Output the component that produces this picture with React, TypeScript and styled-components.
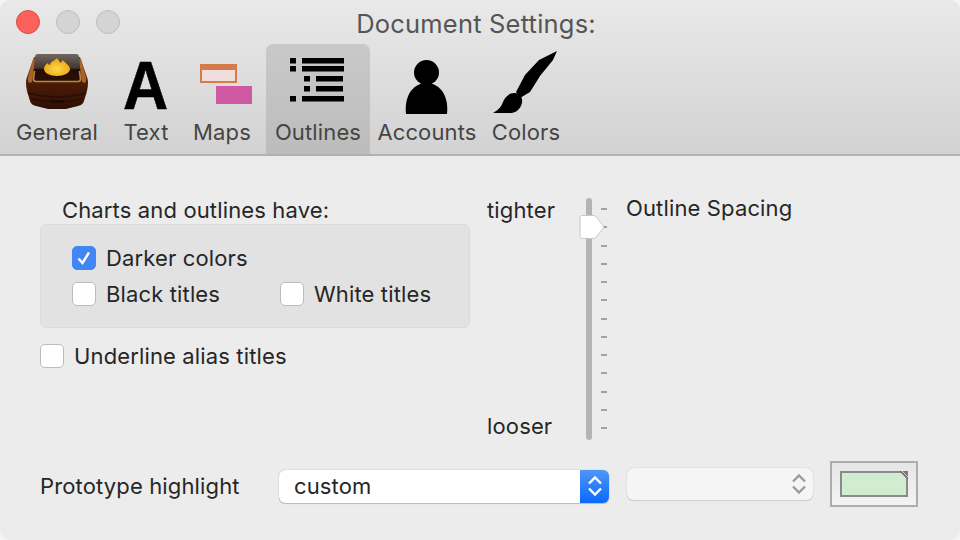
import React from "react";
import styled, { createGlobalStyle } from "styled-components";

const Global = createGlobalStyle`
  html, body { margin: 0; padding: 0; background: #f4f4f4; }
  body { font-family: Inter, "Liberation Sans", sans-serif; letter-spacing: 0.14px; }
`;

const Window = styled.div`
  width: 960px;
  height: 540px;
  box-sizing: border-box;
  background: #ececec;
  border-radius: 10px;
  overflow: hidden;
  display: flex;
  flex-direction: column;
`;
const Header = styled.header`
  height: 156px;
  box-sizing: border-box;
  flex: none;
  border-bottom: 2px solid #b2b2b2;
  background: linear-gradient(#e9e9e9, #d2d2d2);
`;
const TitleBar = styled.div`
  height: 44px;
  display: flex;
  align-items: center;
  padding: 0 128px 0 16px;
  box-sizing: border-box;
`;
const Lights = styled.div`
  display: flex;
  gap: 16px;
  margin-top: -1px;
`;
const Light = styled.span<{ $red?: boolean }>`
  width: 24px;
  height: 24px;
  box-sizing: border-box;
  border-radius: 50%;
  background: ${(p) => (p.$red ? "#fc625c" : "#d4d4d4")};
  border: 1px solid ${(p) => (p.$red ? "#e04a42" : "#bdbdbd")};
`;
const Title = styled.h1`
  flex: 1;
  margin: 0;
  text-align: center;
  font-size: 25.5px;
  font-weight: 400;
  letter-spacing: 0.2px;
  line-height: 48px;
  height: 44px;
  color: #555;
`;
const Tabs = styled.nav`
  display: flex;
  padding-left: 8px;
  height: 110px;
`;
const Tab = styled.div<{ $w: number; $gap?: number; $on?: boolean }>`
  width: ${(p) => p.$w}px;
  margin-right: ${(p) => p.$gap ?? 0}px;
  height: 110px;
  border-radius: 7px 7px 0 0;
  display: flex;
  flex-direction: column;
  align-items: center;
  background: ${(p) => (p.$on ? "linear-gradient(#c9c9c9, #bcbcbc)" : "none")};
`;
const IconBox = styled.div`
  height: 75px;
  width: 100%;
  display: flex;
  justify-content: center;
  flex: none;
`;
const TabLabel = styled.span`
  font-size: 22px;
  line-height: 26px;
  color: #454545;
  white-space: nowrap;
`;
const LetterIcon = styled.span`
  font-family: "Liberation Sans", sans-serif;
  font-weight: 700;
  font-size: 68px;
  line-height: 66px;
  height: 66px;
  color: #000;
  margin-top: 8px;
  display: block;
  transform: scaleX(0.92);
  -webkit-text-stroke: 0.6px #000;
`;
const Body = styled.main`
  flex: 1;
  display: flex;
  flex-direction: column;
  padding: 42px 42px 33px 40px;
  box-sizing: border-box;
`;
const Upper = styled.div`
  display: flex;
  height: 265px;
  flex: none;
`;
const Left = styled.section`
  width: 430px;
  flex: none;
`;
const GroupTitle = styled.div`
  padding-left: 22px;
  height: 26px;
  font-size: 22px;
  line-height: 24px;
  color: #262626;
`;
const Group = styled.div`
  height: 104px;
  box-sizing: border-box;
  background: #e2e2e2;
  border: 1px solid #dadada;
  border-radius: 7px;
  padding: 21px 0 0 31px;
  display: flex;
  flex-direction: column;
  gap: 12px;
`;
const CheckRow = styled.div`
  display: flex;
`;
const Check = styled.label<{ $w?: number }>`
  display: flex;
  align-items: center;
  gap: 10px;
  height: 24px;
  line-height: 24px;
  width: ${(p) => (p.$w ? `${p.$w}px` : "auto")};
  font-size: 22px;
  color: #262626;
  white-space: nowrap;
`;
const Box = styled.span<{ $on?: boolean }>`
  width: 24px;
  height: 24px;
  flex: none;
  box-sizing: border-box;
  border-radius: 5px;
  background: ${(p) => (p.$on ? "#4087f5" : "#fff")};
  border: 1px solid ${(p) => (p.$on ? "#4087f5" : "#bcbcbc")};
  display: flex;
  align-items: center;
  justify-content: center;
`;
const Underline = styled.div`
  margin-top: 16px;
`;
const SliderArea = styled.section`
  position: relative;
  margin-left: 17px;
  width: 120px;
  flex: none;
  height: 254px;
  display: flex;
`;
const SliderLabels = styled.div`
  width: 99px;
  flex: none;
  display: flex;
  flex-direction: column;
  justify-content: space-between;
  font-size: 22px;
  line-height: 26px;
  color: #262626;
  margin-top: -1px;
  height: 242px;
`;
const Track = styled.div`
  width: 6px;
  height: 242px;
  border-radius: 3px;
  background: #b4b4b4;
  flex: none;
`;
const Ticks = styled.div`
  margin-left: 9px;
  padding-top: 10px;
  height: 221px;
  display: flex;
  flex-direction: column;
  justify-content: space-between;
`;
const TickMark = styled.i`
  display: block;
  width: 6px;
  height: 2px;
  background: #a2a2a2;
`;
const Thumb = styled.svg`
  position: absolute;
  left: 92px;
  top: 16px;
`;
const Spacing = styled.div`
  font-size: 22px;
  line-height: 26px;
  color: #262626;
  margin-left: 19px;
  margin-top: -3px;
`;
const Bottom = styled.div`
  display: flex;
  align-items: center;
  height: 46px;
  flex: none;
`;
const BottomLabel = styled.span`
  width: 239px;
  flex: none;
  font-size: 22px;
  color: #262626;
`;
const Select = styled.div`
  width: 330px;
  height: 33px;
  box-sizing: border-box;
  border-radius: 6px;
  background: #fff;
  box-shadow: 0 0 1px rgba(0,0,0,.45), 0 1px 1px rgba(0,0,0,.18);
  overflow: hidden;
  display: flex;
  align-items: center;
  justify-content: space-between;
  font-size: 22px;
  color: #262626;
  padding-left: 15px;
`;
const SelectArrows = styled.span`
  width: 29px;
  height: 33px;
  flex: none;
  background: linear-gradient(#4f97f7, #0a68fb);
  display: flex;
  align-items: center;
  justify-content: center;
`;
const Disabled = styled.div`
  width: 186px;
  height: 32px;
  box-sizing: border-box;
  margin-left: 18px;
  margin-top: -5px;
  border-radius: 6px;
  background: #f5f5f5;
  box-shadow: 0 0 1px rgba(0,0,0,.3), 0 1px 1px rgba(0,0,0,.1);
  display: flex;
  align-items: center;
  justify-content: flex-end;
  padding-right: 6px;
`;
const Well = styled.div`
  width: 88px;
  height: 46px;
  box-sizing: border-box;
  margin-left: 17px;
  border: 2px solid #adadad;
  background: linear-gradient(#e6e6e6, #f3f3f3);
  padding: 8px;
  margin-top: -5px;
`;
const Swatch = styled.div`
  position: relative;
  height: 26px;
  box-sizing: border-box;
  border: 2px solid #8a8a8a;
  background: #d2ecd0;
`;
const SwatchCorner = styled.svg`
  position: absolute;
  right: -2px;
  top: -2px;
`;

const Chevrons = ({ c, w = 2.4 }: { c: string; w?: number }) => (
  <svg width="16" height="24" viewBox="0 0 16 24" fill="none" stroke={c} strokeWidth={w}>
    <path d="M2 9.500 8 3.500l6 6M2 14.500l6 6 6-6" />
  </svg>
);

const GeneralIcon = () => (
  <svg width="66" height="62" viewBox="0 0 66 62" style={{ marginTop: 7, marginLeft: -1 }}>
    <defs>
      <linearGradient id="b" x1="0" y1="0" x2="0" y2="1">
        <stop offset="0" stopColor="#7e4016" />
        <stop offset=".45" stopColor="#4e1e08" />
        <stop offset="1" stopColor="#2e0f04" />
      </linearGradient>
      <linearGradient id="t" x1="0" y1="0" x2="0" y2="1">
        <stop offset="0" stopColor="#6f6763" />
        <stop offset=".5" stopColor="#44352f" />
        <stop offset=".56" stopColor="#240c04" />
        <stop offset="1" stopColor="#2c1005" />
      </linearGradient>
      <radialGradient id="f" cx=".5" cy=".6" r=".6">
        <stop offset="0" stopColor="#ffd84a" />
        <stop offset="1" stopColor="#e8a010" />
      </radialGradient>
    </defs>
    <path d="M10 6 3 26q-2 5 0 14l3 10q1 4 6 5l12 3h18l12-3q5-1 6-5l3-10q2-9 0-14L56 6Z" fill="url(#b)" />
    <path d="M9 8 4 26q-1 3 1 6l3-1 3-22ZM57 8l5 18q1 3-1 6l-3-1-3-22Z" fill="#a9622a" />
    <path d="M4 42q29 8 58 0M8 48q25 6 50 0" stroke="#2a0d03" strokeWidth="1.600" fill="none" />
    <rect x="26" y="49" width="14" height="2.500" rx="1" fill="#1e0802" />
    <path d="M14 3h38q3 0 3 3l2 22q0 3-3 3H12q-3 0-3-3l2-22q0-3 3-3Z" fill="url(#t)" />
    <path d="M10.500 20 9.500 28q0 2.500 2.500 2.500h42q2.500 0 2.500-2.500l-1-8" stroke="#b98a3c" strokeWidth="1.600" fill="none" />
    <path d="M14 2h38" stroke="#e6e0d8" strokeWidth="1.400" />
    <path d="M33 7c1 2 3 3 3 5 2-1 2-2 2-3 3 2 8 6 8 9 0 4-6 7-13 7s-13-3-13-7c0-3 2-5 4-6 0 1 1 2 2 2 0-3 4-4 7-7Z" fill="url(#f)" />
  </svg>
);

const MapsIcon = () => (
  <svg width="72" height="60" viewBox="0 0 72 60" style={{ marginTop: 20 }}>
    <rect x="15" y="1" width="35" height="17" fill="#f0dddd" stroke="#d47b4c" strokeWidth="2" />
    <rect x="14" y="0" width="37" height="6" fill="#d47b4c" />
    <rect x="30" y="22" width="36" height="18" fill="#cf58a3" />
  </svg>
);

const OutlinesIcon = () => (
  <svg width="104" height="60" viewBox="0 0 104 60" style={{ marginTop: 14 }}>
    <g fill="#000">
      <rect x="24" y="0" width="6" height="5.500" />
      <rect x="36" y="0" width="42" height="5.500" />
      <rect x="24" y="8" width="6" height="5.500" />
      <rect x="36" y="8" width="42" height="5.500" />
      <rect x="38" y="18" width="6" height="5.500" />
      <rect x="50" y="18" width="27" height="5.500" />
      <rect x="38" y="28" width="6" height="5.500" />
      <rect x="50" y="28" width="27" height="5.500" />
      <rect x="24" y="38" width="6" height="5.500" />
      <rect x="36" y="38" width="42" height="5.500" />
    </g>
  </svg>
);

const PersonIcon = () => (
  <svg width="44" height="56" viewBox="0 0 44 56" style={{ marginTop: 14 }}>
    <circle cx="21.500" cy="14.500" r="12.500" fill="#000" />
    <path d="M1 56C-1 38 8 25 21.500 25S44 38 42 56Z" fill="#000" />
  </svg>
);

const BrushIcon = () => (
  <svg width="68" height="66" viewBox="0 0 68 66" style={{ marginTop: 7, marginLeft: -1 }}>
    <path d="M65 0 61 9 48 25 38 41 28 47 24 41 33 24 47 9Z" fill="#000" />
    <path d="M22 42c4 0 7 2 8 6 1 6-3 13-10 14H1l3-2c3-2 5-4 7-9 2-5 6-9 11-9Z" fill="#000" />
  </svg>
);

const TICKS = Array.from({ length: 13 }, (_, i) => i);

export default function App() {
  return (
    <>
      <Global />
      <Window>
        <Header>
          <TitleBar>
            <Lights>
              <Light $red />
              <Light />
              <Light />
            </Lights>
            <Title>Document Settings:</Title>
          </TitleBar>
          <Tabs>
            <Tab $w={98}>
              <IconBox><GeneralIcon /></IconBox>
              <TabLabel>General</TabLabel>
            </Tab>
            <Tab $w={80}>
              <IconBox><LetterIcon>A</LetterIcon></IconBox>
              <TabLabel>Text</TabLabel>
            </Tab>
            <Tab $w={72} $gap={8}>
              <IconBox><MapsIcon /></IconBox>
              <TabLabel>Maps</TabLabel>
            </Tab>
            <Tab $w={104} $on>
              <IconBox><OutlinesIcon /></IconBox>
              <TabLabel>Outlines</TabLabel>
            </Tab>
            <Tab $w={114}>
              <IconBox><PersonIcon /></IconBox>
              <TabLabel>Accounts</TabLabel>
            </Tab>
            <Tab $w={84}>
              <IconBox><BrushIcon /></IconBox>
              <TabLabel>Colors</TabLabel>
            </Tab>
          </Tabs>
        </Header>
        <Body>
          <Upper>
            <Left>
              <GroupTitle>Charts and outlines have:</GroupTitle>
              <Group>
                <Check>
                  <Box $on>
                    <svg width="16" height="16" viewBox="0 0 16 16" fill="none" stroke="#fff" strokeWidth="2.400">
                      <path d="M2.500 8.500 6.500 13 13 2.500" />
                    </svg>
                  </Box>
                  Darker colors
                </Check>
                <CheckRow>
                  <Check $w={208}><Box />Black titles</Check>
                  <Check><Box />White titles</Check>
                </CheckRow>
              </Group>
              <Underline>
                <Check><Box />Underline alias titles</Check>
              </Underline>
            </Left>
            <SliderArea>
              <SliderLabels>
                <span>tighter</span>
                <span>looser</span>
              </SliderLabels>
              <Track />
              <Ticks>
                {TICKS.map((i) => <TickMark key={i} />)}
              </Ticks>
              <Thumb width="26" height="26" viewBox="0 0 26 26">
                <path d="M3 1.500h11q2 0 3 1l7 9q1 1.500 0 3l-7 9q-1 1-3 1H3q-2 0-2-2V3.500q0-2 2-2Z" fill="#fff" stroke="#c8c8c8" strokeWidth="1" />
              </Thumb>
            </SliderArea>
            <Spacing>Outline Spacing</Spacing>
          </Upper>
          <Bottom>
            <BottomLabel>Prototype highlight</BottomLabel>
            <Select>
              custom
              <SelectArrows><Chevrons c="#fff" /></SelectArrows>
            </Select>
            <Disabled><Chevrons c="#9c9c9c" /></Disabled>
            <Well>
              <Swatch>
                <SwatchCorner width="10" height="10" viewBox="0 0 10 10">
                  <path d="M1 0h9v9Z" fill="#777" />
                  <path d="M4 0l6 6" stroke="#cfcfcf" strokeWidth="1" />
                </SwatchCorner>
              </Swatch>
            </Well>
          </Bottom>
        </Body>
      </Window>
    </>
  );
}
